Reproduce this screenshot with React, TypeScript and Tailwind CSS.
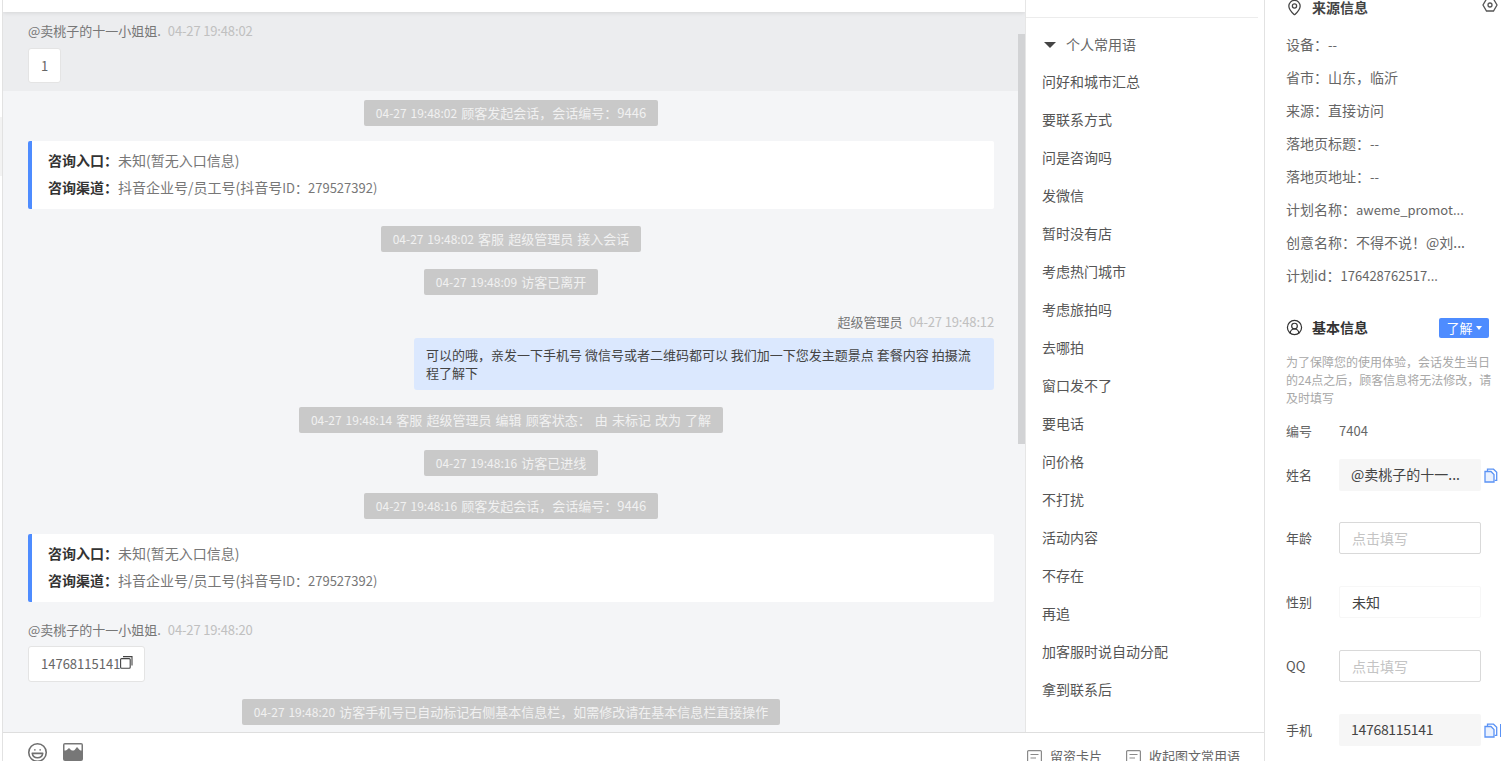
import React from "react";
import { CircleUserRound, Laugh, MapPin } from "lucide-react";

const phrases = [
  "问好和城市汇总",
  "要联系方式",
  "问是咨询吗",
  "发微信",
  "暂时没有店",
  "考虑热门城市",
  "考虑旅拍吗",
  "去哪拍",
  "窗口发不了",
  "要电话",
  "问价格",
  "不打扰",
  "活动内容",
  "不存在",
  "再追",
  "加客服时说自动分配",
  "拿到联系后",
];

const sourceRows = [
  ["设备：", "--"],
  ["省市：", "山东，临沂"],
  ["来源：", "直接访问"],
  ["落地页标题：", "--"],
  ["落地页地址：", "--"],
  ["计划名称：", "aweme_promot..."],
  ["创意名称：", "不得不说！@刘..."],
  ["计划id：", "176428762517..."],
];

const Pill = ({ time, text, className }: { time: string; text: string; className: string }) => (
  <div className={`self-center mr-[6px] h-[26px] px-3 rounded-[2px] bg-[#c9c9c9] text-[13px] leading-[26px] text-[#f1f1f1] whitespace-nowrap [word-spacing:1.2px] ${className}`}>
    <span className="text-[12px]">{time}</span> {text}
  </div>
);

const EntryCard = ({ className }: { className: string }) => (
  <div className={`ml-[25px] mr-[31px] h-[68px] border-l-4 border-[#4e8cff] rounded-[2px] bg-white pl-4 pt-[6px] text-[14px] leading-[27px] text-[#777]  ${className}`}>
    <p><span className="font-bold text-[#333]">咨询入口：</span>未知(暂无入口信息)</p>
    <p>
      <span className="font-bold text-[#333]">咨询渠道：</span>抖音企业号/员工号(抖音号
      <span className="text-[13px]">ID：279527392)</span>
    </p>
  </div>
);

const CopyBlue = () => (
  <svg width="14" height="15" viewBox="0 0 14 15" fill="none" stroke="#5b93f5" strokeWidth="1.3" className="shrink-0">
    <path d="M3.5 3V1.2h6l3.2 3v8.2h-2" />
    <path d="M1 3.5h6l3 3V14H1z" fill="#eaf1fe" />
  </svg>
);

const CardIcon = () => (
  <svg width="15" height="13" viewBox="0 0 15 13" fill="none" stroke="#8a8a8a" strokeWidth="1.2" className="shrink-0">
    <rect x="0.6" y="0.6" width="13.8" height="11.8" rx="1" />
    <path d="M3.5 4.5h8M3.5 8h5.5" />
  </svg>
);

const Field = ({
  label,
  value,
  placeholder,
  tone,
  copy,
  className = "mb-8",
  valueClass = "",
  children,
}: {
  label: string;
  value?: string;
  placeholder?: string;
  tone: "filled" | "outline" | "plain";
  copy?: boolean;
  className?: string;
  valueClass?: string;
  children?: React.ReactNode;
}) => {
  const toneClass =
    tone === "filled"
      ? "bg-[#f6f6f6]"
      : tone === "outline"
        ? "bg-white border border-[#d9d9d9]"
        : "bg-white border border-[#f7f7f7]";
  return (
    <div className={`flex items-center h-8 whitespace-nowrap ${className}`}>
      <span className="w-[53px] text-[13px] text-[#555] shrink-0">{label}</span>
      <div className={`w-[142px] h-8 rounded-[2px] px-3 text-[14px] leading-[30px] shrink-0 ${toneClass} ${placeholder ? "text-[#c4c4c4]" : "text-[#444]"} ${valueClass}`}>
        {value ?? placeholder}
      </div>
      {copy && (
        <span className="ml-[3px] flex">
          <CopyBlue />
        </span>
      )}
      {children}
    </div>
  );
};

export default function App() {
  return (
    <div
      className="flex h-[761px] w-[1503px] overflow-hidden bg-white"
      style={{ fontFamily: '"Noto Sans CJK SC", "Noto Sans", sans-serif' }}
    >
      {/* left gutter */}
      <div className="w-[2px] shrink-0 bg-white pt-[117px]">
        <div className="h-[59px] bg-[#f3f3f3]" />
      </div>

      {/* chat + phrases + toolbar */}
      <div className="w-[1263px] shrink-0 flex flex-col border-x border-[#e2e2e2]">
        <div className="flex h-[733px] shrink-0 border-b border-[#dedede]">
          {/* chat */}
          <div className="relative w-[1022px] shrink-0 flex flex-col bg-[#f4f5f7] overflow-hidden">
            <div className="h-3 shrink-0 bg-white shadow-[0_1px_4px_rgba(0,0,0,0.1)] z-10" />
            <div className="h-[79px] shrink-0 bg-[#ecedef] pl-[25px] pt-[9px]">
              <div className="h-5 text-[13px] leading-5 text-[#777] whitespace-nowrap">
                @卖桃子的十一小姐姐. <span className="ml-1 tracking-[-0.15px] text-[#c0c0c0]">04-27 19:48:02</span>
              </div>
              <div className="mt-[7px] w-[33px] h-[35px] rounded-[3px] border border-[#e4e4e4] bg-white text-center text-[13px] leading-[33px] text-[#666]">
                1
              </div>
            </div>

            <Pill className="mt-[9px]" time="04-27 19:48:02" text="顾客发起会话，会话编号：9446" />
            <EntryCard className="mt-[15px]" />
            <Pill className="mt-[17px]" time="04-27 19:48:02" text="客服 超级管理员 接入会话" />
            <Pill className="mt-[17px]" time="04-27 19:48:09" text="访客已离开" />

            <div className="mt-[17px] mr-[31px] h-5 text-right text-[13px] leading-5 text-[#777] whitespace-nowrap">
              超级管理员 <span className="ml-1 tracking-[-0.15px] text-[#c0c0c0]">04-27 19:48:12</span>
            </div>
            <div className="self-end mt-[6px] mr-[31px] w-[580px] h-[52px] rounded-[3px] bg-[#dbe8fe] px-3 pt-[8px] text-[13px] leading-[18px] text-[#444]">
              可以的哦，亲发一下手机号 微信号或者二维码都可以 我们加一下您发主题景点 套餐内容 拍摄流程了解下
            </div>

            <Pill className="mt-[17px]" time="04-27 19:48:14" text="客服 超级管理员 编辑 顾客状态： 由 未标记 改为 了解" />
            <Pill className="mt-[17px]" time="04-27 19:48:16" text="访客已进线" />
            <Pill className="mt-[17px]" time="04-27 19:48:16" text="顾客发起会话，会话编号：9446" />
            <EntryCard className="mt-[15px]" />

            <div className="mt-[18px] ml-[25px] h-5 text-[13px] leading-5 text-[#777] whitespace-nowrap">
              @卖桃子的十一小姐姐. <span className="ml-1 tracking-[-0.15px] text-[#c0c0c0]">04-27 19:48:20</span>
            </div>
            <div className="ml-[25px] mt-[6px] w-[117px] h-9 shrink-0 flex items-center rounded-[3px] border border-[#e4e4e4] bg-white pl-3 text-[13px] text-[#666]">
              14768115141
              <svg width="13" height="13" viewBox="0 0 13 13" fill="none" stroke="#444" strokeWidth="1.1" className="-mt-[3px]">
                <rect x="0.6" y="2.6" width="9.6" height="9.6" rx="1" />
                <path d="M3 0.6h9v9" />
              </svg>
            </div>
            <Pill className="mt-[17px]" time="04-27 19:48:20" text="访客手机号已自动标记右侧基本信息栏，如需修改请在基本信息栏直接操作" />

            {/* scrollbar thumb */}
            <div className="absolute right-0 top-[34px] w-[7px] h-[410px] bg-[#d2d3d5]" />
          </div>

          {/* phrases */}
          <div className="flex-1 min-w-0 border-l border-[#e6e6e6] bg-white">
            <div className="h-[18px] mr-[6px] border-b border-[#ececec]" />
            <div className="flex items-center h-[19px] mt-[17px] pl-[18px] text-[14px] text-[#666]">
              <span className="w-0 h-0 border-x-[6px] border-x-transparent border-t-[6px] border-t-[#444]" />
              <span className="ml-[10px]">个人常用语</span>
            </div>
            <ul className="mt-2 pl-4 text-[14px] text-[#555]">
              {phrases.map((item) => (
                <li key={item} className="h-[38px] leading-[38px] whitespace-nowrap">
                  {item}
                </li>
              ))}
            </ul>
          </div>
        </div>

        {/* input toolbar */}
        <div className="flex-1 min-h-0 flex items-start overflow-hidden bg-white pl-[24px] pr-[24px] pt-[9px]">
          <Laugh size={21} color="#6f6f6f" strokeWidth={1.8} className="shrink-0" />
          <svg width="20" height="20" viewBox="0 0 20 20" className="ml-[15px] shrink-0">
            <rect x="0" y="1" width="20" height="18" rx="2" fill="#777" />
            <rect x="1.5" y="2.5" width="17" height="6" fill="#fff" />
            <path d="M1.5 10 6 6l4 4 4-5 4.5 5v2h-17z" fill="#777" />
          </svg>
          <div className="ml-auto -mt-[2px] flex items-center h-[28px] pt-[4px] text-[13px] text-[#666] whitespace-nowrap">
            <CardIcon />
            <span className="ml-2">留资卡片</span>
            <span className="ml-6"><CardIcon /></span>
            <span className="ml-2">收起图文常用语</span>
          </div>
        </div>
      </div>

      {/* info panel */}
      <div className="flex-1 min-w-0 overflow-hidden bg-white pl-[21px]">
        <div className="flex items-center h-[14px] text-[14px] leading-[14px] font-bold text-[#444] whitespace-nowrap">
          <MapPin size={17} color="#444" strokeWidth={1.8} className="shrink-0" />
          <span className="ml-[9px]">来源信息</span>
          <svg width="16" height="16" viewBox="0 0 16 16" fill="none" stroke="#555" strokeWidth="1.3" className="ml-[114px] -mt-[4px] shrink-0">
            <path d="M4.5 2h7L15 8l-3.5 6h-7L1 8z" />
            <circle cx="8" cy="8" r="2" />
          </svg>
        </div>
        <div className="mt-[14px] text-[14px] text-[#666]">
          {sourceRows.map(([label, value]) => (
            <div key={label} className="h-[33px] leading-[33px] whitespace-nowrap">
              {label}
              <span className={/^[\x00-\x7f]+$/.test(value) ? "text-[13px]" : ""}>{value}</span>
            </div>
          ))}
        </div>

        <div className="flex items-center h-[19px] mt-[26px] text-[14px] font-bold text-[#333]">
          <CircleUserRound size={17} color="#333" strokeWidth={1.7} className="shrink-0" />
          <span className="ml-[9px]">基本信息</span>
          <span className="ml-[71px] flex items-center justify-center w-[50px] h-5 rounded-[2px] bg-[#4e8cff] text-[13px] font-normal text-white">
            了解
            <span className="ml-[3px] w-0 h-0 border-x-[3px] border-x-transparent border-t-[4px] border-t-white" />
          </span>
        </div>
        <p className="mt-[16px] w-[208px] text-[12px] leading-[18px] text-[#a8a8a8]">
          为了保障您的使用体验，会话发生当日的24点之后，顾客信息将无法修改，请及时填写
        </p>
        <div className="flex h-5 mt-[14px] items-center text-[13px] text-[#666]">
          <span className="w-[53px]">编号</span>
          <span>7404</span>
        </div>
        <div className="mt-[18px]">
          <Field label="姓名" value="@卖桃子的十一..." tone="filled" copy className="mb-[31px]" />
          <Field label="年龄" placeholder="点击填写" tone="outline" />
          <Field label="性别" value="未知" tone="plain" />
          <Field label="QQ" placeholder="点击填写" tone="outline" />
          <Field label="手机" value="14768115141" tone="filled" copy valueClass="tracking-[-0.3px]">
            <span className="ml-[2px] h-[13px] w-[3px] border-l border-[#5b93f5]" />
          </Field>
        </div>
      </div>
    </div>
  );
}
